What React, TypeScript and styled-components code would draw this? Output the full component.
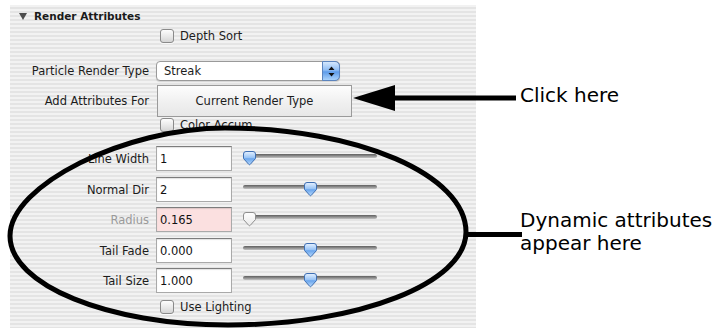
import React from 'react';
import styled, { createGlobalStyle } from 'styled-components';

const GlobalStyle = createGlobalStyle`
  html, body {
    margin: 0;
    padding: 0;
    background: #fff;
  }
  body {
    font-family: "DejaVu Sans", Verdana, sans-serif;
  }
`;

const Stage = styled.div`
  position: relative;
  width: 720px;
  height: 330px;
  overflow: hidden;
  display: flex;
  align-items: flex-start;
  background: #fff;
`;

const Panel = styled.div`
  margin: 5px 0 0 10px;
  width: 466px;
  height: 323px;
  flex: none;
  display: flex;
  flex-direction: column;
  background: repeating-linear-gradient(180deg, #f2f2f2 0 2px, #e4e4e4 2px 4px);
  font: 11.5px "DejaVu Sans", Verdana, sans-serif;
  color: #1c1c1c;
`;

const Header = styled.div`
  height: 22px;
  display: flex;
  align-items: center;
  gap: 7px;
  padding-left: 9px;
  font-weight: bold;
  font-size: 10.5px;
  color: #1a1a1a;
`;

const Disclosure = styled.span`
  width: 0;
  height: 0;
  border-left: 4px solid transparent;
  border-right: 4px solid transparent;
  border-top: 7px solid #4d4d4d;
`;

const Row = styled.div<{ $h: number; $mt?: number }>`
  display: flex;
  align-items: center;
  height: ${(p) => p.$h}px;
  margin-top: ${(p) => p.$mt ?? 0}px;
`;

const Label = styled.span<{ $disabled?: boolean }>`
  width: 139px;
  margin-right: 7px;
  flex: none;
  text-align: right;
  white-space: nowrap;
  color: ${(p) => (p.$disabled ? '#9a9a9a' : '#1c1c1c')};
`;

const CheckWrap = styled.label`
  display: flex;
  align-items: center;
  gap: 6px;
  margin-left: 4px;
`;

const CheckBox = styled.span`
  width: 14px;
  height: 14px;
  box-sizing: border-box;
  border: 1px solid #8a8a8a;
  border-radius: 3px;
  background: linear-gradient(#fdfdfd, #e6e6e6 60%, #d4d4d4);
  box-shadow: 0 1px 0 rgba(255, 255, 255, 0.7);
`;

const SelectBox = styled.div`
  width: 184px;
  height: 20px;
  box-sizing: border-box;
  display: flex;
  align-items: center;
  border: 1px solid #9a9a9a;
  border-radius: 4px;
  background: #fff;
  box-shadow: 0 1px 1px rgba(0, 0, 0, 0.12);
  padding-left: 7px;
`;

const Stepper = styled.span`
  margin-left: auto;
  margin-right: -1px;
  width: 18px;
  height: 20px;
  box-sizing: border-box;
  display: flex;
  align-items: center;
  justify-content: center;
  border: 1px solid #5b84be;
  border-radius: 0 5px 5px 0;
  background: linear-gradient(#d4e7fd, #8fbdf4 45%, #5d9be9 55%, #a9d2fb);
`;

const PushButton = styled.div`
  margin-left: 1px;
  width: 195px;
  height: 32px;
  box-sizing: border-box;
  display: flex;
  align-items: center;
  justify-content: center;
  border: 1px solid #9a9a9a;
  background: linear-gradient(#fdfdfd, #f1f1f1 50%, #e7e7e7);
  color: #1c1c1c;
`;

const Field = styled.input<{ $invalid?: boolean }>`
  width: 76px;
  height: 25px;
  box-sizing: border-box;
  margin: 0;
  padding: 0 3px;
  border: 1px solid #a9a9a9;
  border-top-color: #7c7c7c;
  box-shadow: inset 0 1px 1px rgba(0, 0, 0, 0.12);
  background: ${(p) => (p.$invalid ? '#fbe0e0' : '#fff')};
  font: 11.5px "DejaVu Sans", Verdana, sans-serif;
  color: #111;
  outline: none;
`;

const SliderBox = styled.div`
  position: relative;
  margin-left: 11px;
  width: 134px;
  height: 15px;
  margin-top: -1px;
`;

const Track = styled.div`
  margin-top: 3px;
  height: 4px;
  border-radius: 2px;
  background: linear-gradient(#5f5f5f, #8e8e8e 50%, #c4c4c4);
`;

const Thumb = styled.svg`
  position: absolute;
  top: 0;
`;

const Callouts = styled.div`
  margin-left: 44px;
  padding-top: 84px;
  display: flex;
  flex-direction: column;
  font: 20px/23px "DejaVu Sans", Verdana, sans-serif;
  color: #000;
  white-space: nowrap;
`;

const CalloutText = styled.div<{ $mt?: number }>`
  margin-top: ${(p) => p.$mt ?? 0}px;
`;

const Overlay = styled.svg`
  position: absolute;
  left: 0;
  top: 0;
  pointer-events: none;
`;

type CheckProps = { label: string };

const Check = ({ label }: CheckProps) => (
  <CheckWrap>
    <CheckBox />
    {label}
  </CheckWrap>
);

type SliderProps = { value: number; disabled?: boolean };

const Slider = ({ value, disabled }: SliderProps) => (
  <SliderBox>
    <Track />
    <Thumb width="13" height="15" viewBox="0 0 13 15" style={{ left: `${Math.round(value * 121)}px` }}>
      <defs>
        <linearGradient id="thumbBlue" x1="0" y1="0" x2="0" y2="1">
          <stop offset="0" stopColor="#e6f1ff" />
          <stop offset="0.45" stopColor="#9cc6f6" />
          <stop offset="0.55" stopColor="#6aa5ec" />
          <stop offset="1" stopColor="#b9dafc" />
        </linearGradient>
        <linearGradient id="thumbGrey" x1="0" y1="0" x2="0" y2="1">
          <stop offset="0" stopColor="#ffffff" />
          <stop offset="1" stopColor="#e9e9e9" />
        </linearGradient>
      </defs>
      <path
        d="M3 0.5 H10 Q12.5 0.5 12.5 3 V7.5 L7.3 13.3 Q6.5 14.2 5.7 13.3 L0.5 7.5 V3 Q0.5 0.5 3 0.5 Z"
        fill={disabled ? 'url(#thumbGrey)' : 'url(#thumbBlue)'}
        stroke={disabled ? '#8e8e8e' : '#3e6fb3'}
        strokeWidth="1"
        strokeLinejoin="round"
      />
    </Thumb>
  </SliderBox>
);

type AttrProps = { label: string; value: string; pos: number; mt: number; disabled?: boolean };

const AttrRow = ({ label, value, pos, mt, disabled }: AttrProps) => (
  <Row $h={25} $mt={mt}>
    <Label $disabled={disabled}>{label}</Label>
    <Field defaultValue={value} readOnly $invalid={disabled} />
    <Slider value={pos} disabled={disabled} />
  </Row>
);

const attributes = [
  { label: 'Line Width', value: '1', pos: 0, mt: 14 },
  { label: 'Normal Dir', value: '2', pos: 0.5, mt: 6 },
  { label: 'Radius', value: '0.165', pos: 0, mt: 5, disabled: true },
  { label: 'Tail Fade', value: '0.000', pos: 0.5, mt: 6 },
  { label: 'Tail Size', value: '1.000', pos: 0.5, mt: 5 },
];

export default function App() {
  return (
    <Stage>
      <GlobalStyle />
      <Panel>
        <Header>
          <Disclosure />
          Render Attributes
        </Header>
        <Row $h={18}>
          <Label />
          <Check label="Depth Sort" />
        </Row>
        <Row $h={20} $mt={16}>
          <Label>Particle Render Type</Label>
          <SelectBox>
            Streak
            <Stepper>
              <svg width="7" height="11" viewBox="0 0 7 11">
                <path d="M3.5 0.5 L6.5 4 H0.5 Z M3.5 10.5 L6.5 7 H0.5 Z" fill="#111" />
              </svg>
            </Stepper>
          </SelectBox>
        </Row>
        <Row $h={32} $mt={4}>
          <Label>Add Attributes For</Label>
          <PushButton>Current Render Type</PushButton>
        </Row>
        <Row $h={14} $mt={1}>
          <Label />
          <Check label="Color Accum" />
        </Row>
        {attributes.map((a) => (
          <AttrRow key={a.label} {...a} />
        ))}
        <Row $h={14} $mt={7}>
          <Label />
          <Check label="Use Lighting" />
        </Row>
      </Panel>
      <Callouts>
        <CalloutText>Click here</CalloutText>
        <CalloutText $mt={102}>
          Dynamic attributes
          <br />
          appear here
        </CalloutText>
      </Callouts>
      <Overlay width="720" height="330" viewBox="0 0 720 330">
        <path d="M353 98 L395 85 L395 111 Z" fill="#000" />
        <rect x="393" y="95.5" width="123" height="5" fill="#000" />
        <path
          d="M10 236 C10 185 125 128 225 128 C358 128 466 175 466 232 C466 283 359 325 228 325 C108 325 10 285 10 236 Z"
          fill="none"
          stroke="#000"
          strokeWidth="5"
        />
        <rect x="464" y="232" width="58" height="5" fill="#000" />
      </Overlay>
    </Stage>
  );
}
